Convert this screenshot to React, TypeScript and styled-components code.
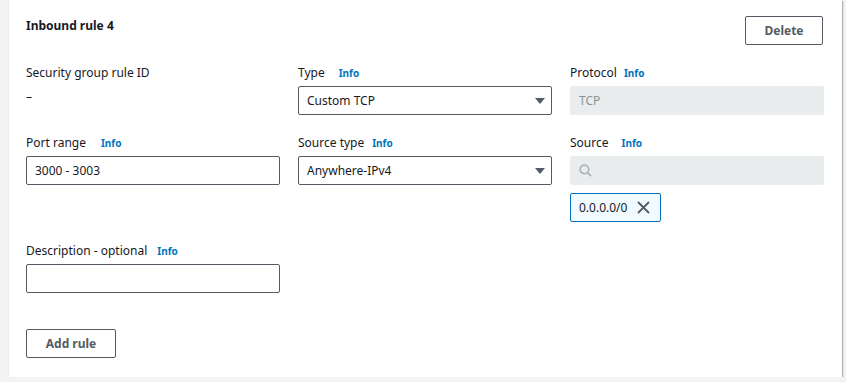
import styled, { createGlobalStyle } from "styled-components";

const GlobalStyle = createGlobalStyle`
  html, body {
    margin: 0;
    padding: 0;
    background: #f2f3f3;
    font-family: "Noto Sans", "Open Sans", Arial, sans-serif;
    color: #16191f;
  }
`;

const Panel = styled.section`
  margin-left: 8px;
  width: 834px;
  height: 377px;
  box-sizing: border-box;
  background: #ffffff;
  border-left: 1px solid #eaeded;
  box-shadow: 1px 1px 1px 0 rgba(0, 28, 36, 0.3);
  padding: 16px 19px 0 17px;
`;

const Header = styled.div`
  display: flex;
  justify-content: space-between;
  align-items: flex-start;
`;

const Heading = styled.h2`
  margin: -1px 0 0;
  font-size: 12px;
  line-height: 22px;
  font-weight: 700;
`;

const Button = styled.button<{ width: number }>`
  width: ${(p) => p.width}px;
  height: 29px;
  box-sizing: border-box;
  background: #ffffff;
  border: 1px solid #545b64;
  border-radius: 2px;
  color: #545b64;
  font-family: inherit;
  font-size: 12px;
  font-weight: 700;
  padding: 0;
  cursor: pointer;
`;

const Grid = styled.div`
  display: grid;
  grid-template-columns: 254px 254px 254px;
  column-gap: 18px;
  row-gap: 16px;
  margin-top: 16px;
`;

const Field = styled.div<{ offset?: number }>`
  display: flex;
  flex-direction: column;
  margin-top: ${(p) => p.offset ?? 0}px;
`;

const Label = styled.div`
  display: flex;
  align-items: center;
  font-size: 12px;
  line-height: 22px;
  padding-top: 1px;
  margin-bottom: 2px;
`;

const Info = styled.span<{ gap: number }>`
  margin-left: ${(p) => p.gap}px;
  color: #0073bb;
  font-size: 10px;
  font-weight: 700;
`;

const Value = styled.div`
  font-size: 12px;
  line-height: 22px;
`;

const Input = styled.div<{ disabled?: boolean }>`
  height: 29px;
  box-sizing: border-box;
  display: flex;
  align-items: center;
  padding: 0 8px;
  font-size: 12px;
  border: 1px solid ${(p) => (p.disabled ? "#eaeded" : "#545b64")};
  background: ${(p) => (p.disabled ? "#eaeded" : "#ffffff")};
  color: ${(p) => (p.disabled ? "#879596" : "#16191f")};
  border-radius: 2px;
`;

const SelectBox = styled(Input)`
  justify-content: space-between;
  padding-right: 6px;
`;

const Arrow = styled.span`
  width: 0;
  height: 0;
  border-left: 5px solid transparent;
  border-right: 5px solid transparent;
  border-top: 6px solid #545b64;
`;

const Token = styled.div`
  margin-top: 8px;
  align-self: flex-start;
  height: 29px;
  box-sizing: border-box;
  display: flex;
  align-items: center;
  gap: 10px;
  padding: 0 10px 0 8px;
  background: #f1faff;
  border: 1px solid #0073bb;
  border-radius: 2px;
  font-size: 12px;
`;

const Footer = styled.div`
  margin-top: 36px;
`;

const SearchIcon = () => (
  <svg width="13" height="13" viewBox="0 0 14 14" fill="none">
    <circle cx="5.8" cy="5.8" r="4.6" stroke="#aab7b8" strokeWidth="1.8" />
    <line x1="9.2" y1="9.2" x2="13" y2="13" stroke="#aab7b8" strokeWidth="2" />
  </svg>
);

const CloseIcon = () => (
  <svg width="13" height="13" viewBox="0 0 13 13">
    <path d="M1 1 L12 12 M12 1 L1 12" stroke="#545b64" strokeWidth="1.8" />
  </svg>
);

export default function App() {
  return (
    <>
      <GlobalStyle />
      <Panel>
        <Header>
          <Heading>Inbound rule 4</Heading>
          <Button width={78}>Delete</Button>
        </Header>
        <Grid>
          <Field>
            <Label>Security group rule ID</Label>
            <Value>–</Value>
          </Field>
          <Field>
            <Label>
              Type<Info gap={14}>Info</Info>
            </Label>
            <SelectBox>
              Custom TCP
              <Arrow />
            </SelectBox>
          </Field>
          <Field>
            <Label>
              Protocol<Info gap={7}>Info</Info>
            </Label>
            <Input disabled>TCP</Input>
          </Field>

          <Field>
            <Label>
              Port range<Info gap={15}>Info</Info>
            </Label>
            <Input>3000 - 3003</Input>
          </Field>
          <Field>
            <Label>
              Source type<Info gap={8}>Info</Info>
            </Label>
            <SelectBox>
              Anywhere-IPv4
              <Arrow />
            </SelectBox>
          </Field>
          <Field>
            <Label>
              Source<Info gap={13}>Info</Info>
            </Label>
            <Input disabled>
              <SearchIcon />
            </Input>
            <Token>
              0.0.0.0/0
              <CloseIcon />
            </Token>
          </Field>

          <Field offset={1}>
            <Label>
              Description - optional<Info gap={10}>Info</Info>
            </Label>
            <Input />
          </Field>
        </Grid>
        <Footer>
          <Button width={90}>Add rule</Button>
        </Footer>
      </Panel>
    </>
  );
}
